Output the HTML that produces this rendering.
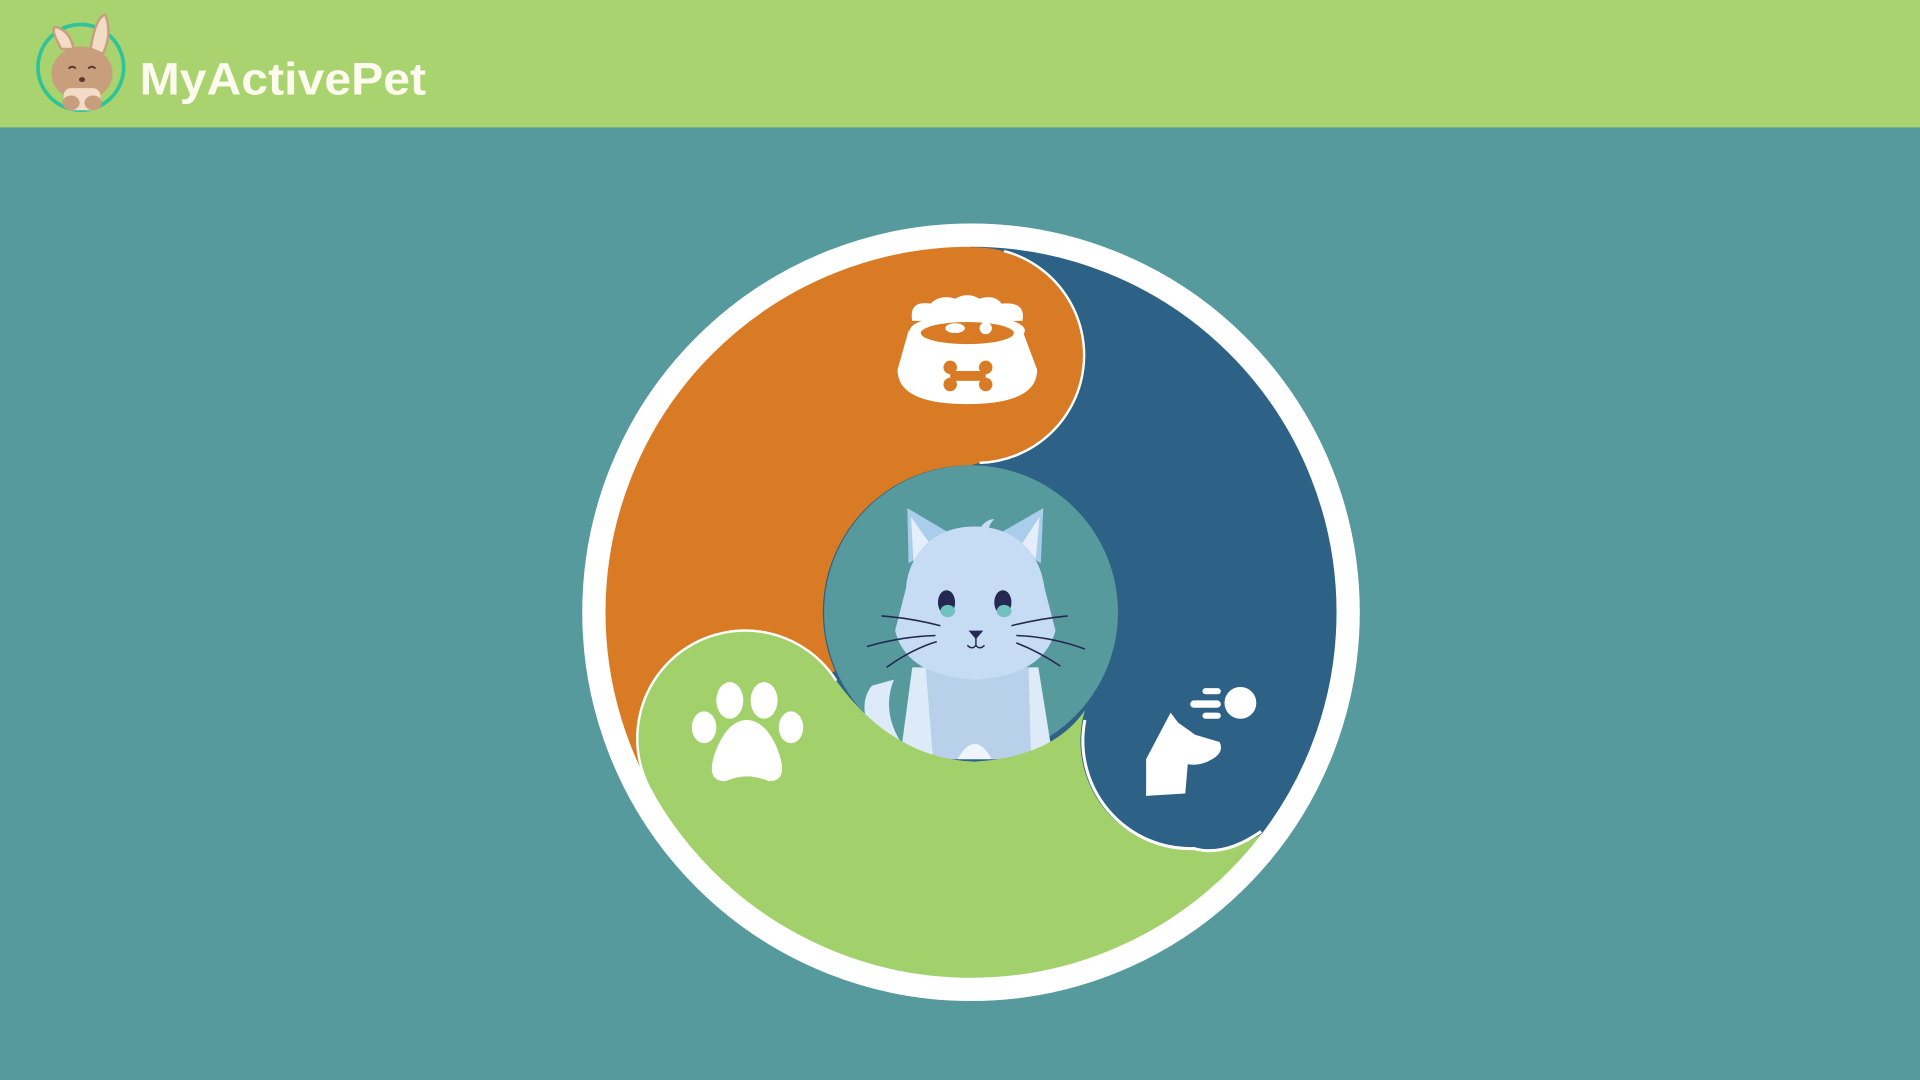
<!DOCTYPE html>
<html><head><meta charset="utf-8"><style>
html,body{margin:0;padding:0;width:1920px;height:1080px;overflow:hidden;background:#579a9e}
svg{display:block}
</style></head><body>
<svg width="1920" height="1080" viewBox="0 0 1568 882" xmlns="http://www.w3.org/2000/svg">
<rect x="0" y="0" width="1568" height="882" fill="#579a9e"/>
<rect x="0" y="0" width="1568" height="104" fill="#a8d36e"/>
<!-- logo -->
<circle cx="66" cy="55" r="35" fill="none" stroke="#2fc39c" stroke-width="3"/>
<path d="M50,40 Q40,22 46,22 Q58,26 60,40Z" fill="#f2dcc6" stroke="#c99e7c" stroke-width="2"/>
<path d="M74,40 Q78,14 86,12 Q92,28 84,44Z" fill="#f2dcc6" stroke="#c99e7c" stroke-width="2"/>
<ellipse cx="67" cy="60" rx="25" ry="22" fill="#c99e7c"/>
<rect x="52" y="72" width="30" height="18" rx="6" fill="#f2dcc6"/>
<ellipse cx="58" cy="84" rx="7" ry="6" fill="#c99e7c"/>
<ellipse cx="76" cy="84" rx="7" ry="6" fill="#c99e7c"/>
<path d="M56,56 q3,-3 6,0 M72,56 q3,-3 6,0" stroke="#5b3a2e" stroke-width="1.5" fill="none"/>
<ellipse cx="67" cy="65" rx="2.5" ry="2" fill="#5b3a2e"/>
<text x="114" y="77" font-family="Liberation Sans, sans-serif" font-weight="bold" font-size="37" fill="#fdfbee" textLength="234" lengthAdjust="spacingAndGlyphs">MyActivePet</text>
<!-- big circle -->
<circle cx="793" cy="500" r="300" fill="#2d6185"/>
<!-- orange -->
<path d="M793,200 A300,300 0 0 0 524,632 L682,548 A120,120 0 0 1 793,380 L800,378 A88,88 0 0 0 793,202 Z" fill="#d97a25"/>
<path d="M800,378 A88,88 0 0 0 820,205" fill="none" stroke="#fff" stroke-width="2"/>
<!-- inner teal -->
<circle cx="793" cy="500" r="120" fill="#579a9e"/>
<!-- cat -->
<g>
<path d="M712,560 Q700,575 712,600 L735,605 Q720,580 730,555Z" fill="#ddeaf8"/>
<path d="M745,545 L735,620 L860,620 L848,545Z" fill="#ddeaf8"/>
<path d="M756,545 L762,620 L842,620 L840,545Z" fill="#b8d0ea"/>
<path d="M782,620 Q796,595 810,620Z" fill="#eef5fd"/>
<path d="M741,415 L742,460 L780,438Z" fill="#a9cdeb"/>
<path d="M852,415 L850,460 L812,438Z" fill="#a9cdeb"/>
<path d="M744,422 L746,458 L760,445Z" fill="#e4effb"/>
<path d="M849,422 L846,456 L834,445Z" fill="#e4effb"/>
<path d="M796,430 C760,430 742,455 740,480 L731,515 Q740,552 796,555 Q852,552 862,515 L853,480 C850,455 832,430 796,430Z" fill="#c6dcf5"/>
<path d="M800,432 Q805,424 812,424 Q806,430 808,436Z" fill="#c6dcf5"/>
<ellipse cx="773" cy="492" rx="7" ry="10" fill="#252850"/>
<ellipse cx="819" cy="492" rx="7" ry="10" fill="#252850"/>
<ellipse cx="774" cy="499" rx="6" ry="5" fill="#6fc1bf"/>
<ellipse cx="820" cy="499" rx="6" ry="5" fill="#6fc1bf"/>
<path d="M791,515 L803,515 L797,522Z" fill="#252850"/>
<path d="M797,521 L797,528 M790,527 Q794,531 797,527 Q800,531 804,527" stroke="#252850" stroke-width="1.2" fill="none"/>
<g stroke="#252850" stroke-width="1.3" fill="none">
<path d="M720,503 Q745,505 768,511"/><path d="M708,528 Q735,520 764,519"/><path d="M724,545 Q745,530 765,524"/>
<path d="M872,503 Q850,505 826,511"/><path d="M886,530 Q858,520 830,519"/><path d="M866,544 Q848,532 830,525"/>
</g>
</g>
<!-- green -->
<path d="M534,650 A300,300 0 0 0 1032,680 Q1000,700 975,693 A88,88 0 0 1 886,580 Q860,618 796,622 Q730,620 683,556 A88,88 0 0 0 534,650 Z" fill="#a2d06b"/>
<path d="M683,556 A88,88 0 0 0 534,650" fill="none" stroke="#fff" stroke-width="2"/>
<path d="M1030,679 Q1000,700 975,693 A88,88 0 0 1 886,588" fill="none" stroke="#fff" stroke-width="2.5"/>
<circle cx="793" cy="500" r="308" fill="none" stroke="#fff" stroke-width="19"/>
<!-- bowl icon -->
<g fill="#fff">
<path d="M745,262 Q742,245 760,248 Q768,240 780,244 Q790,238 800,244 Q812,240 818,248 Q838,246 835,262Z"/>
<ellipse cx="790" cy="270" rx="47" ry="13"/>
<path d="M742,270 L835,270 L847,302 Q847,330 790,330 Q733,330 733,302Z"/>
</g>
<ellipse cx="790" cy="272" rx="38" ry="9" fill="#d97a25"/>
<ellipse cx="780" cy="268" rx="8" ry="4" fill="#fff"/>
<ellipse cx="805" cy="268" rx="5" ry="5" fill="#fff"/>
<g fill="#d97a25"><circle cx="776" cy="300" r="5.5"/><circle cx="776" cy="314" r="5.5"/><circle cx="805" cy="300" r="5.5"/><circle cx="805" cy="314" r="5.5"/><rect x="776" y="303" width="29" height="8"/></g>
<!-- paw -->
<g fill="#fff">
<ellipse cx="596" cy="572" rx="11" ry="15"/><ellipse cx="624" cy="572" rx="11" ry="15"/>
<ellipse cx="575" cy="594" rx="10" ry="13"/><ellipse cx="646" cy="594" rx="10" ry="13"/>
<path d="M610,588 Q625,588 635,612 Q645,638 628,638 Q618,634 610,634 Q602,634 592,638 Q575,638 585,612 Q595,588 610,588Z"/>
</g>
<!-- dog icon -->
<g fill="#fff">
<circle cx="1013" cy="574" r="13"/>
<rect x="972" y="572" width="25" height="6" rx="3"/><rect x="982" y="562" width="15" height="5" rx="2.5"/><rect x="982" y="582" width="15" height="5" rx="2.5"/>
<path d="M936,620 L956,582 L962,590 L976,600 L996,606 Q1000,614 990,620 Q980,626 970,624 L968,648 L936,650Z"/>
</g>
</svg>
</body></html>
